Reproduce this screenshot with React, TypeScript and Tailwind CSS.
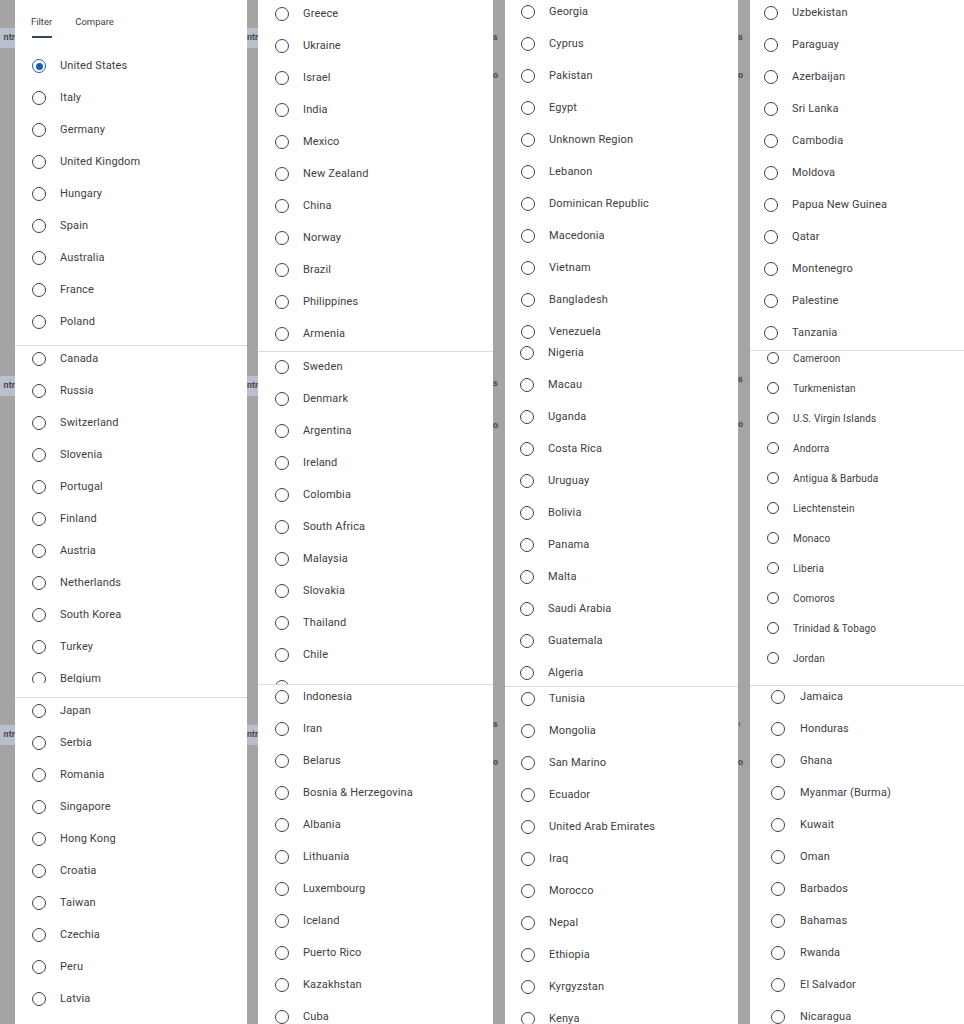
import React from "react";

type Tile = {
  tile: string; // height + separator classes
  list: string; // margin-top + padding-left
  row?: string; // row height + gap
  radio?: "lg" | "sm";
  text?: string;
  items: string[];
  header?: boolean;
  clip?: string;
  extraRadio?: boolean;
};

function Radio({ small, checked }: { small?: boolean; checked?: boolean }) {
  return (
    <span
      className={
        "flex shrink-0 items-center justify-center rounded-full border-[1.6px] " +
        (small ? "h-[12px] w-[12px] " : "h-[14px] w-[14px] ") +
        (checked ? "border-[#1a5fb4]" : "border-[#3c4043]")
      }
    >
      {checked ? <span className="block h-[7px] w-[7px] rounded-full bg-[#1a5fb4]" /> : null}
    </span>
  );
}

function TileView({ t }: { t: Tile }) {
  const row = t.row ?? "h-[32px] gap-[14px]";
  const text = t.text ?? "text-[11px]";
  const small = t.radio === "sm";
  return (
    <div className={"relative shrink-0 overflow-hidden bg-white " + t.tile}>
      {t.header ? (
        <div className="relative h-[50px]">
          <div className="flex gap-[23px] pl-[16px] pt-[15px] text-[9.5px] text-[#3c4043]">
            <span>Filter</span>
            <span>Compare</span>
          </div>
          <div className="absolute left-[17px] top-[36px] h-[2px] w-[20px] bg-[#33465c]" />
        </div>
      ) : null}
      <div className={"overflow-hidden " + (t.clip ?? "")}>
        <div className={"flex flex-col " + t.list}>
          {t.items.map((name, i) => (
            <div key={i} className={"flex items-center " + row}>
              <Radio small={small} checked={t.header && i === 0} />
              <span className={"tracking-[0.15px] text-[#3c4043] " + text}>{name}</span>
            </div>
          ))}
          {t.extraRadio ? (
            <div className={"flex items-center " + row}>
              <Radio small={small} />
            </div>
          ) : null}
        </div>
      </div>
    </div>
  );
}

function Column({ className, tiles }: { className: string; tiles: Tile[] }) {
  return (
    <div className={"flex shrink-0 flex-col " + className}>
      {tiles.map((t, i) => (
        <TileView key={i} t={t} />
      ))}
    </div>
  );
}

function Frag({ className, text, band }: { className: string; text: string; band?: boolean }) {
  return (
    <div
      className={
        "flex h-[20px] w-full shrink-0 items-center overflow-hidden text-[9px] font-bold text-[#4a4a4a] " +
        (band ? "bg-[#b7c0cc] " : "") +
        className
      }
    >
      {text}
    </div>
  );
}

const col1: Tile[] = [
  {
    tile: "h-[345px]",
    list: "mt-0 pl-[17px]",
    header: true,
    items: ["United States", "Italy", "Germany", "United Kingdom", "Hungary", "Spain", "Australia", "France", "Poland"],
  },
  {
    tile: "h-[352px] border-t border-[#dcdcdc]",
    list: "mt-[-3px] pl-[17px]",
    clip: "h-[337px]",
    items: ["Canada", "Russia", "Switzerland", "Slovenia", "Portugal", "Finland", "Austria", "Netherlands", "South Korea", "Turkey", "Belgium"],
  },
  {
    tile: "h-[327px] border-t border-[#dcdcdc]",
    list: "mt-[-3px] pl-[17px]",
    items: ["Japan", "Serbia", "Romania", "Singapore", "Hong Kong", "Croatia", "Taiwan", "Czechia", "Peru", "Latvia"],
  },
];

const col2: Tile[] = [
  {
    tile: "h-[351px]",
    list: "mt-[-2px] pl-[17px]",
    items: ["Greece", "Ukraine", "Israel", "India", "Mexico", "New Zealand", "China", "Norway", "Brazil", "Philippines", "Armenia"],
  },
  {
    tile: "h-[333px] border-t border-[#dcdcdc]",
    list: "mt-[-1px] pl-[17px]",
    extraRadio: true,
    items: ["Sweden", "Denmark", "Argentina", "Ireland", "Colombia", "South Africa", "Malaysia", "Slovakia", "Thailand", "Chile"],
  },
  {
    tile: "h-[340px] border-t border-[#dcdcdc]",
    list: "mt-[-4px] pl-[17px]",
    items: ["Indonesia", "Iran", "Belarus", "Bosnia & Herzegovina", "Albania", "Lithuania", "Luxembourg", "Iceland", "Puerto Rico", "Kazakhstan", "Cuba"],
  },
];

const col3: Tile[] = [
  {
    tile: "h-[342px]",
    list: "mt-[-4px] pl-[16px]",
    items: ["Georgia", "Cyprus", "Pakistan", "Egypt", "Unknown Region", "Lebanon", "Dominican Republic", "Macedonia", "Vietnam", "Bangladesh", "Venezuela"],
  },
  {
    tile: "h-[344px]",
    list: "mt-[-5px] pl-[15px]",
    items: ["Nigeria", "Macau", "Uganda", "Costa Rica", "Uruguay", "Bolivia", "Panama", "Malta", "Saudi Arabia", "Guatemala", "Algeria"],
  },
  {
    tile: "h-[338px] border-t border-[#dcdcdc]",
    list: "mt-[-4px] pl-[16px]",
    items: ["Tunisia", "Mongolia", "San Marino", "Ecuador", "United Arab Emirates", "Iraq", "Morocco", "Nepal", "Ethiopia", "Kyrgyzstan", "Kenya"],
  },
];

const col4: Tile[] = [
  {
    tile: "h-[350px]",
    list: "mt-[-3px] pl-[14px]",
    items: ["Uzbekistan", "Paraguay", "Azerbaijan", "Sri Lanka", "Cambodia", "Moldova", "Papua New Guinea", "Qatar", "Montenegro", "Palestine", "Tanzania"],
  },
  {
    tile: "h-[335px] border-t border-[#dcdcdc]",
    list: "mt-[-8px] pl-[17px]",
    row: "h-[30px] gap-[14px]",
    radio: "sm",
    text: "text-[10px]",
    items: ["Cameroon", "Turkmenistan", "U.S. Virgin Islands", "Andorra", "Antigua & Barbuda", "Liechtenstein", "Monaco", "Liberia", "Comoros", "Trinidad & Tobago", "Jordan"],
  },
  {
    tile: "h-[339px] border-t border-[#dcdcdc]",
    list: "mt-[-5px] pl-[21px]",
    row: "h-[32px] gap-[15px]",
    items: ["Jamaica", "Honduras", "Ghana", "Myanmar (Burma)", "Kuwait", "Oman", "Barbados", "Bahamas", "Rwanda", "El Salvador", "Nicaragua"],
  },
];

function Strip({ className, children }: { className: string; children: React.ReactNode }) {
  return <div className={"flex h-[1024px] shrink-0 flex-col overflow-hidden bg-[#a4a4a4] " + className}>{children}</div>;
}

export default function App() {
  return (
    <div
      className="flex h-[1024px] w-[964px] overflow-hidden bg-white"
      style={{ fontFamily: 'Roboto, "Noto Sans", "Liberation Sans", sans-serif' }}
    >
      <Strip className="w-[15px]">
        <Frag className="mt-[28px] justify-end" text="ntr" band />
        <Frag className="mt-[328px] justify-end" text="ntr" band />
        <Frag className="mt-[329px] justify-end" text="ntr" band />
      </Strip>
      <Column className="w-[232px]" tiles={col1} />
      <Strip className="w-[11px]">
        <Frag className="mt-[28px]" text="ntr" band />
        <Frag className="mt-[328px]" text="ntr" band />
        <Frag className="mt-[329px]" text="ntr" band />
      </Strip>
      <Column className="w-[235px]" tiles={col2} />
      <Strip className="w-[12px]">
        <Frag className="mt-[28px]" text="s" />
        <Frag className="mt-[18px]" text="o" />
        <Frag className="mt-[288px]" text="s" />
        <Frag className="mt-[22px]" text="o" />
        <Frag className="mt-[279px]" text="s" />
        <Frag className="mt-[18px]" text="o" />
      </Strip>
      <Column className="w-[233px]" tiles={col3} />
      <Strip className="w-[12px]">
        <Frag className="mt-[28px]" text="s" />
        <Frag className="mt-[18px]" text="o" />
        <Frag className="mt-[284px]" text="s" />
        <Frag className="mt-[25px]" text="o" />
        <Frag className="mt-[280px]" text="›" />
        <Frag className="mt-[18px]" text="o" />
      </Strip>
      <Column className="w-[214px]" tiles={col4} />
    </div>
  );
}
